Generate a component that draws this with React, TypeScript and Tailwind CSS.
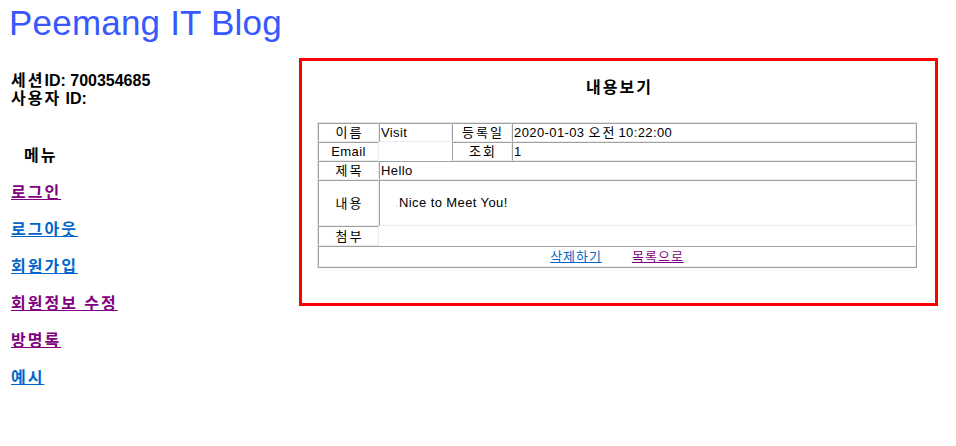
import React from "react";

const ko = { fontFamily: '"Liberation Sans", "Noto Sans CJK KR", sans-serif' };

function Cell({
  children,
  className = "",
  empty = false,
  colSpan,
}: {
  children?: React.ReactNode;
  className?: string;
  empty?: boolean;
  colSpan?: number;
}) {
  return (
    <td
      colSpan={colSpan}
      className={
        "border p-0 px-[1px] align-middle leading-[17px] " +
        (empty
          ? "border-transparent "
          : "border-t-[#a0a0a0] border-l-[#a0a0a0] border-b-[#ececec] border-r-[#ececec] ") +
        className
      }
    >
      {children}
    </td>
  );
}

function K({ children }: { children: React.ReactNode }) {
  return <span className="tracking-[2px] -mr-[2px]">{children}</span>;
}

export default function App() {
  return (
    <div className="bg-white text-black w-[956px] h-[446px]" style={ko}>
      <h1 className="text-[35px] leading-[40px] pt-[3px] pl-[9px] text-[#3858ff] font-normal m-0 tracking-[0.2px]">
        Peemang IT Blog
      </h1>
      <div className="flex mt-[15px]">
        <div className="w-[299px] shrink-0 pt-[14px] pl-[11px]">
          <div className="text-[16px] leading-[18px] font-bold">
            <div><span className="tracking-[2px]">세션</span>ID: 700354685</div>
            <div><span className="tracking-[2px]">사용자</span> ID:</div>
          </div>
          <div className="mt-[38px] pl-[13px] text-[16px] leading-[20px] font-bold tracking-[2px]">메뉴</div>
          <div className="mt-[17px] flex flex-col gap-[17px] text-[16px] leading-[20px] font-bold tracking-[2px]">
            <a href="#" className="underline text-[#800080] self-start">로그인</a>
            <a href="#" className="underline text-[#0066cc] self-start">로그아웃</a>
            <a href="#" className="underline text-[#0066cc] self-start">회원가입</a>
            <a href="#" className="underline text-[#800080] self-start">회원정보 수정</a>
            <a href="#" className="underline text-[#800080] self-start">방명록</a>
            <a href="#" className="underline text-[#0066cc] self-start">예시</a>
          </div>
        </div>
        <div className="w-[639px] h-[248px] border-[3px] border-[#ff0000] flex flex-col items-start">
          <div className="mt-[17px] self-center text-[16px] leading-[20px] font-bold tracking-[2px] pl-[2px]">내용보기</div>
          <table className="mt-[24px] ml-[15px] w-[600px] border-separate border-spacing-0 border border-t-[#e3e3e3] border-l-[#e3e3e3] border-b-[#a0a0a0] border-r-[#a0a0a0] text-[13px] tracking-[0.4px]">
            <colgroup>
              <col className="w-[61px]" />
              <col className="w-[73px]" />
              <col className="w-[60px]" />
              <col />
            </colgroup>
            <tbody>
              <tr className="h-[19px]">
                <Cell className="text-center"><K>이름</K></Cell>
                <Cell>Visit</Cell>
                <Cell className="text-center"><K>등록일</K></Cell>
                <Cell>2020-01-03 <K>오전</K> 10:22:00</Cell>
              </tr>
              <tr className="h-[19px]">
                <Cell className="text-center">Email</Cell>
                <Cell empty></Cell>
                <Cell className="text-center"><K>조회</K></Cell>
                <Cell>1</Cell>
              </tr>
              <tr className="h-[19px]">
                <Cell className="text-center"><K>제목</K></Cell>
                <Cell colSpan={3}>Hello</Cell>
              </tr>
              <tr className="h-[46px]">
                <Cell className="text-center"><K>내용</K></Cell>
                <Cell colSpan={3}>
                  <span className="pl-[14px] inline-block pb-[2px]">
                    <span className="text-[#d8d8d8]">.</span>Nice to Meet You!
                  </span>
                </Cell>
              </tr>
              <tr className="h-[20px]">
                <Cell className="text-center"><K>첨부</K></Cell>
                <Cell colSpan={3} empty></Cell>
              </tr>
              <tr className="h-[21px]">
                <Cell colSpan={4} className="text-center">
                  <a href="#" className="underline text-[#0066cc] tracking-[1px]">삭제하기</a>
                  <span className="inline-block w-[30px]"></span>
                  <a href="#" className="underline text-[#800080] tracking-[1px]">목록으로</a>
                </Cell>
              </tr>
            </tbody>
          </table>
        </div>
      </div>
    </div>
  );
}
